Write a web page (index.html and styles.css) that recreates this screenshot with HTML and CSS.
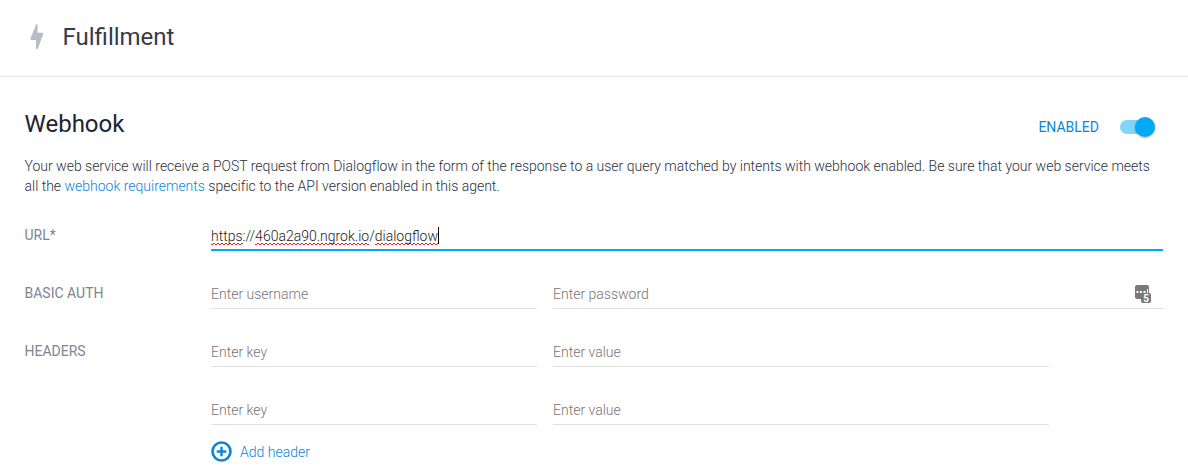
FILE: index.html
```html
<!DOCTYPE html>
<html lang="en">
<head>
<meta charset="utf-8">
<title>Fulfillment</title>
<link rel="stylesheet" href="styles.css">
</head>
<body>
<header class="page-header">
  <svg class="bolt" width="14" height="26" viewBox="0 0 14 26"><path d="M6 .8Q7.2-.2 7.7 1L7.5 8.8h4.8q1.3.2.8 1.6L7.9 24.4Q6.6 25.8 6 24.4L6 16H1.2Q0 15.8.4 14.4z" fill="#b7bcc6"/></svg>
  <h1 class="page-title">Fulfillment</h1>
</header>
<main class="content">
  <div class="section-head">
    <h2 class="section-title">Webhook</h2>
    <div class="status"><span class="status-label">ENABLED</span><span class="switch"><span class="knob"></span></span></div>
  </div>
  <p class="description">Your web service will receive a POST request from Dialogflow in the form of the response to a user query matched by intents with webhook enabled. Be sure that your web service meets all the <a class="link">webhook requirements</a> specific to the API version enabled in this agent.</p>
  <div class="form">
    <div class="row">
      <div class="label">URL*</div>
      <div class="field focused"><span class="misspelled">https</span>://<span class="misspelled">460a2a90.ngrok.io</span>/<span class="misspelled">dialogflow</span><span class="caret"></span></div>
    </div>
    <div class="row">
      <div class="label">BASIC AUTH</div>
      <div class="field key">Enter username</div>
      <div class="field">Enter password
        <svg class="manager" width="17" height="19" viewBox="0 0 17 19"><rect x="0" y="0" width="14" height="14" rx="2" fill="#797979"/><path d="M1.5 6h2v2h-2zM5 6h2v2H5zM8.5 6h2v2h-2zM12 4h1v4h-1z" fill="#fff"/><rect x="6" y="8" width="10" height="10" rx="2" fill="#797979"/><text class="manager-count" x="11" y="16.8" text-anchor="middle">5</text></svg>
      </div>
    </div>
    <div class="row">
      <div class="label">HEADERS</div>
      <div class="field key">Enter key</div>
      <div class="field value">Enter value</div>
    </div>
    <div class="row">
      <div class="label"></div>
      <div class="field key">Enter key</div>
      <div class="field value">Enter value</div>
    </div>
  </div>
  <div class="add-header">
    <svg width="21" height="21" viewBox="0 0 21 21" fill="none" stroke="#0b85db"><circle cx="10.5" cy="10.5" r="9" stroke-width="2.6"/><path d="M10.5 5.7v9.6M5.7 10.5h9.6" stroke-width="2.4"/></svg>
    <span>Add header</span>
  </div>
</main>
</body>
</html>
```
FILE: styles.css
```css
* { box-sizing: border-box; }
body {
  margin: 0;
  background: #fff;
  color: #2b303b;
  font: 300 14px/20px Roboto, sans-serif;
  overflow: hidden;
}
.page-header {
  display: flex;
  align-items: center;
  height: 77px;
  padding: 0 0 2px 30px;
  border-bottom: 1px solid #e5e6e7;
}
.bolt { flex: none; margin-right: 18.5px; }
.page-title, .section-title {
  margin: 0;
  font-size: 24px;
  font-weight: 400;
  line-height: 32px;
}
.page-title { color: #343a48; }
.section-title { color: #20242e; }
.content { padding: 31px 25px 0 24.5px; }
.section-head {
  display: flex;
  justify-content: space-between;
  height: 48px;
}
.status {
  display: flex;
  align-items: center;
  height: 38px;
  margin-right: 8px;
}
.status-label {
  margin-right: 21px;
  color: #0b85db;
  font-weight: 400;
}
.switch {
  display: flex;
  justify-content: flex-end;
  align-items: center;
  width: 35px;
  height: 14px;
  border-radius: 7px;
  background: #81d4fa;
}
.knob {
  width: 20px;
  height: 20px;
  border-radius: 50%;
  background: #03a9f4;
  box-shadow: 0 1px 2px rgba(0, 0, 0, .3);
}
.description { margin: 0; letter-spacing: -.005px; }
.link { color: #0b85db; }
.form { padding-top: 29px; }
.row {
  display: flex;
  height: 58px;
}
.label {
  flex: none;
  width: 186.5px;
  color: #7d8592;
  font-weight: 400;
}
.field {
  flex: 1;
  display: flex;
  height: 26px;
  padding-top: 1px;
  color: #757575;
  border-bottom: 1px solid #e0e0e0;
}
.key {
  flex: none;
  width: 326px;
  margin-right: 16px;
}
.value {
  flex: none;
  width: 496px;
}
.focused {
  color: #212121;
  border-bottom: 2px solid #03a9f4;
}
.misspelled {
  height: 19px;
  background:
    linear-gradient(135deg, transparent 34%, #e22 34%, #e22 66%, transparent 66%) 0 100% / 4px 2px repeat-x,
    linear-gradient(45deg, transparent 34%, #e22 34%, #e22 66%, transparent 66%) 2px 100% / 4px 2px repeat-x;
}
.caret {
  width: 1px;
  height: 17px;
  margin-top: 1px;
  background: #000;
}
.manager { margin: 1px 11px 0 auto; }
.manager-count {
  fill: #fff;
  font: 700 10px Roboto, sans-serif;
}
.add-header {
  display: flex;
  align-items: center;
  gap: 8px;
  margin: -16px 0 0 186.5px;
  color: #0b85db;
}
```
